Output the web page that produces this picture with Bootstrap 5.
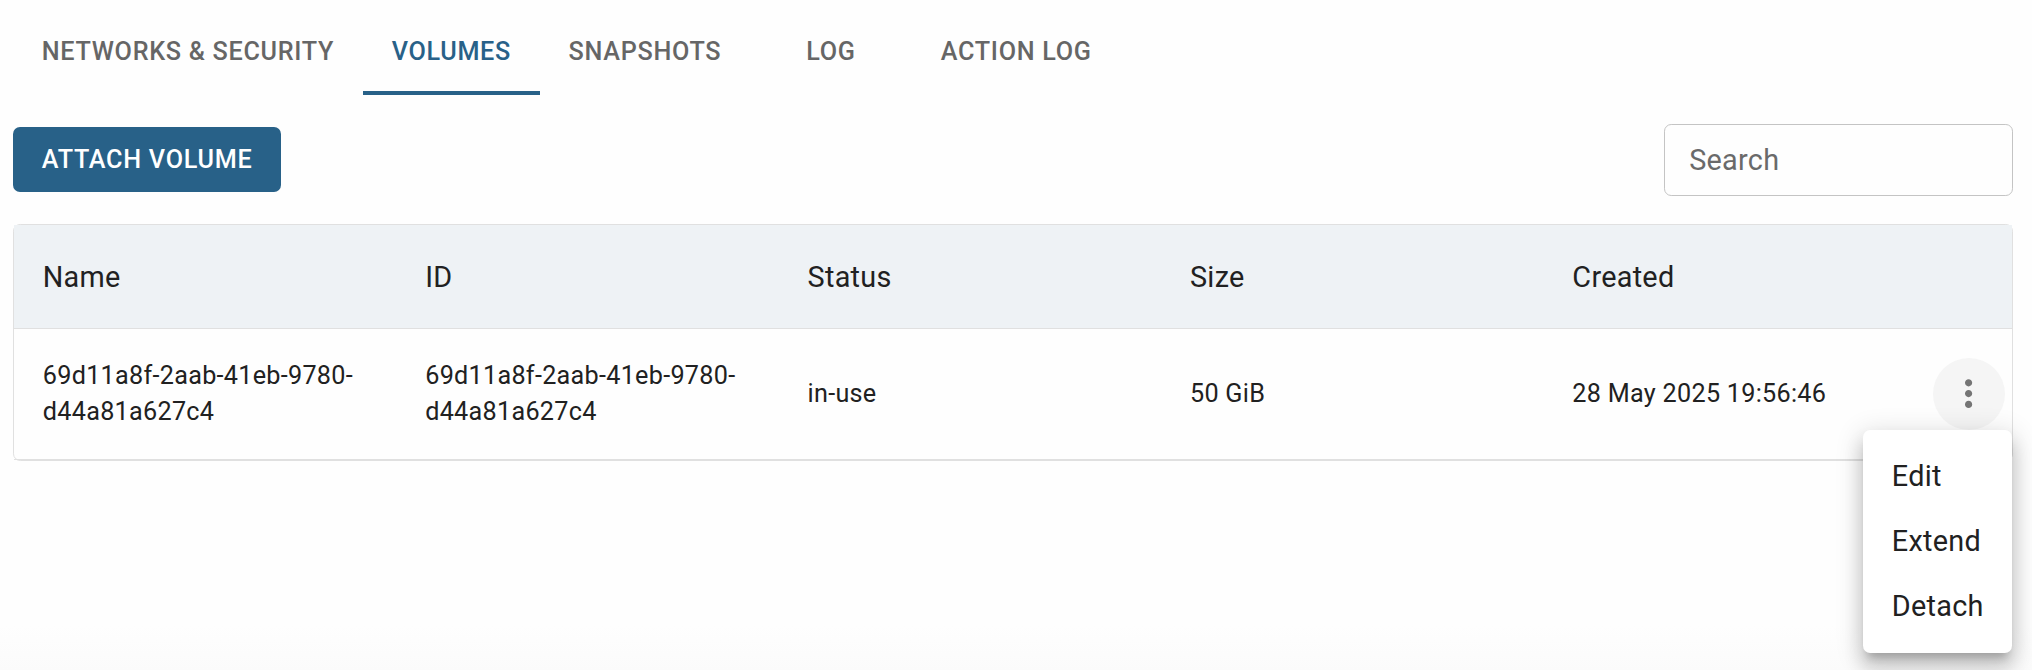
<!DOCTYPE html>
<html lang="en">
<head>
<meta charset="utf-8">
<meta name="viewport" content="width=device-width, initial-scale=1">
<title>Volumes</title>
<link href="https://cdn.jsdelivr.net/npm/bootstrap@5.3.0/dist/css/bootstrap.min.css" rel="stylesheet">
<style>
  html { font-size: 28.8px; }
  body { font-family: Roboto, "Liberation Sans", sans-serif; color: #212121; height: 670px; overflow: hidden; padding: 9px 19px 0 13px; }
  .page-fade { background: linear-gradient(#fefefe 625px, #fbfbfb 670px); }
  .detail-tabs .nav-link { min-width: 162px; height: 86px; padding: 0 28.8px; color: #666; font-size: 25.2px; font-weight: 500; letter-spacing: .0275em; text-transform: uppercase; line-height: 1.25; border-bottom: 4px solid transparent; border-top: 4px solid transparent; }
  .detail-tabs .nav-link.active { color: #286188; border-bottom-color: #286188; }
  .toolbar { margin-top: 29px; height: 72px; }
  .btn-attach { --bs-btn-color: #fff; --bs-btn-bg: #286188; --bs-btn-border-width: 0; --bs-btn-hover-bg: #1c4660; --bs-btn-hover-color: #fff; --bs-btn-border-radius: 7px; height: 65px; padding: 1px 28.8px 0; margin-bottom: 1px; font-size: 25.2px; font-weight: 500; letter-spacing: .02857em; text-transform: uppercase; }
  .search-field { width: 349px; height: 72px; padding: 0 24.2px; border: 1px solid #c4c4c4; border-radius: 7.2px; background: transparent; letter-spacing: .00938em; }
  .search-field::placeholder { color: #6a6a6a; opacity: 1; }
  .volume-card { margin-top: 28px; width: 2000px; border: 1px solid #e0e0e0; border-radius: 7.2px; }
  .volume-table { table-layout: fixed; letter-spacing: .0098em; --bs-table-bg: transparent; color: #212121; }
  .volume-table > :not(caption) > * > * { padding: 0 28.8px; border-color: #e0e0e0; color: inherit; border-bottom-width: 1px; box-shadow: none; }
  .volume-table > thead > tr > th { height: 103px; font-weight: 400; vertical-align: middle; padding-top: 2px; background: #eef2f5; }
  .volume-table tbody td { height: 131px; font-size: 25.2px; line-height: 36px; }
  .volume-table > :not(caption) > tr > .menu-col { width: 86px; padding: 0 7px; }
  .btn-more { width: 72px; height: 72px; padding: 0; border: 0; background: #f5f5f5; color: #757575; }
  .btn-more svg { width: 43.2px; height: 43.2px; display: block; }
  .row-menu { top: 100%; right: -7px; min-width: 0; width: 149px; padding: 14px 0; border: 0; border-radius: 7.2px; font-size: 28.8px; background: #fff; box-shadow: 0 9px 9px -5.4px rgba(0,0,0,.2), 0 14.4px 18px 1.8px rgba(0,0,0,.14), 0 5.4px 25.2px 3.6px rgba(0,0,0,.12); margin: 0; }
  .row-menu .dropdown-item { height: 65px; padding: 0 28.8px; line-height: 64px; letter-spacing: .00938em; color: #212121; }
</style>
</head>
<body class="page-fade">
  <nav class="nav detail-tabs flex-nowrap">
    <a class="nav-link d-flex align-items-center justify-content-center text-nowrap" href="#">Networks &amp; Security</a>
    <a class="nav-link active d-flex align-items-center justify-content-center" aria-current="page" href="#">Volumes</a>
    <a class="nav-link d-flex align-items-center justify-content-center" href="#">Snapshots</a>
    <a class="nav-link d-flex align-items-center justify-content-center" href="#">Log</a>
    <a class="nav-link d-flex align-items-center justify-content-center text-nowrap" href="#">Action Log</a>
  </nav>

  <div class="toolbar d-flex align-items-center justify-content-between">
    <button type="button" class="btn btn-attach">Attach volume</button>
    <input type="search" class="form-control search-field" placeholder="Search" aria-label="Search">
  </div>

  <div class="volume-card">
    <table class="table volume-table align-middle mb-0">
      <thead>
        <tr><th>Name</th><th>ID</th><th>Status</th><th>Size</th><th>Created</th><th class="menu-col"></th></tr>
      </thead>
      <tbody>
        <tr>
          <td>69d11a8f-2aab-41eb-9780-d44a81a627c4</td>
          <td>69d11a8f-2aab-41eb-9780-d44a81a627c4</td>
          <td>in-use</td>
          <td>50 GiB</td>
          <td>28 May 2025 19:56:46</td>
          <td class="menu-col">
            <div class="dropdown">
              <button type="button" class="btn btn-more rounded-circle d-flex align-items-center justify-content-center" aria-label="Volume actions" aria-expanded="true">
                <svg viewBox="0 0 24 24" fill="currentColor" aria-hidden="true"><path d="M12 8c1.1 0 2-.9 2-2s-.9-2-2-2-2 .9-2 2 .9 2 2 2zm0 2c-1.1 0-2 .9-2 2s.9 2 2 2 2-.9 2-2-.9-2-2-2zm0 6c-1.1 0-2 .9-2 2s.9 2 2 2 2-.9 2-2-.9-2-2-2z"/></svg>
              </button>
              <ul class="dropdown-menu row-menu show">
                <li><a class="dropdown-item" href="#">Edit</a></li>
                <li><a class="dropdown-item" href="#">Extend</a></li>
                <li><a class="dropdown-item" href="#">Detach</a></li>
              </ul>
            </div>
          </td>
        </tr>
      </tbody>
    </table>
  </div>
<script src="https://cdn.jsdelivr.net/npm/bootstrap@5.3.0/dist/js/bootstrap.bundle.min.js"></script>
</body>
</html>
